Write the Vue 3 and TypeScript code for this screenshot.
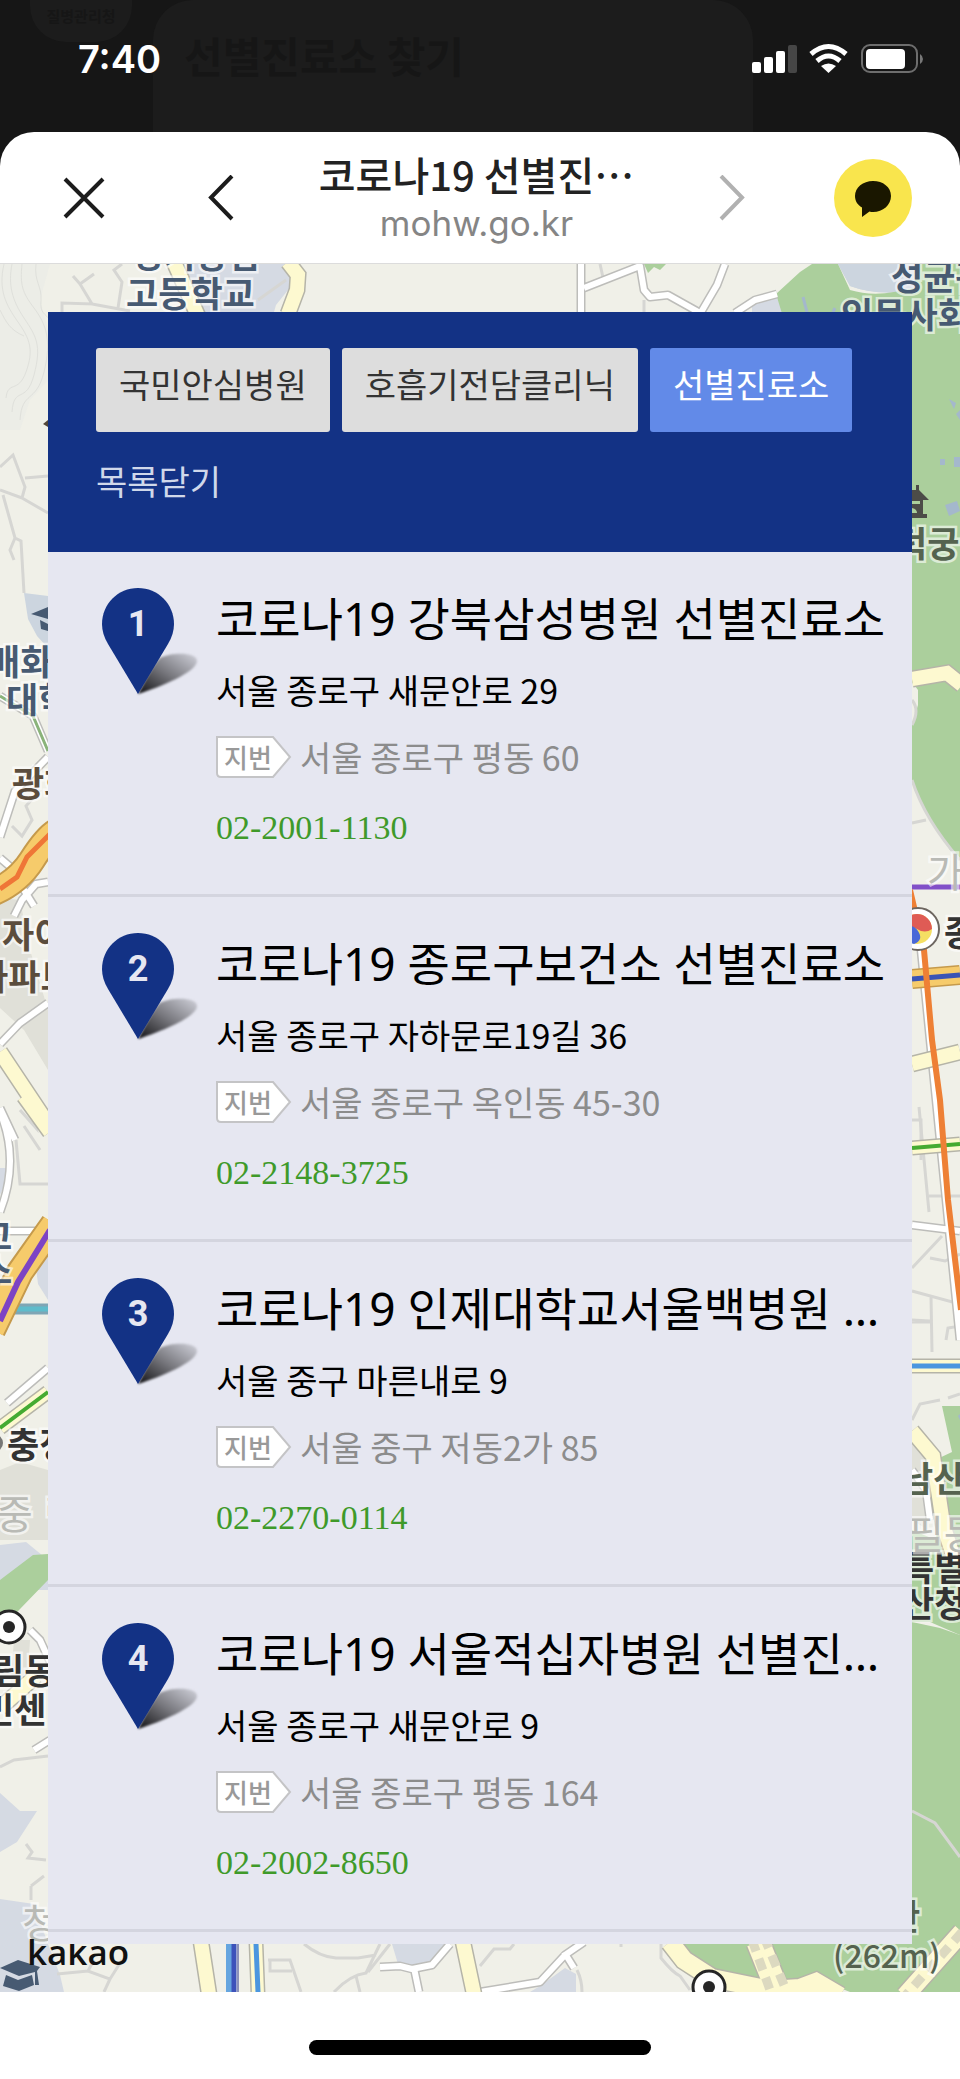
<script setup lang="ts">
import { ref } from 'vue'

interface Clinic {
  name: string
  road: string
  lot: string
  phone: string
}

interface MapLabel {
  x: number
  y: number
  text: string
  kind: string
}

const tabs: string[] = ['국민안심병원', '호흡기전담클리닉', '선별진료소']
const activeTab = ref<string>('선별진료소')
const listOpen = ref<boolean>(true)

const clinics: Clinic[] = [
  { name: '코로나19 강북삼성병원 선별진료소', road: '서울 종로구 새문안로 29', lot: '서울 종로구 평동 60', phone: '02-2001-1130' },
  { name: '코로나19 종로구보건소 선별진료소', road: '서울 종로구 자하문로19길 36', lot: '서울 종로구 옥인동 45-30', phone: '02-2148-3725' },
  { name: '코로나19 인제대학교서울백병원 선별진료소', road: '서울 중구 마른내로 9', lot: '서울 중구 저동2가 85', phone: '02-2270-0114' },
  { name: '코로나19 서울적십자병원 선별진료소', road: '서울 종로구 새문안로 9', lot: '서울 종로구 평동 164', phone: '02-2002-8650' },
]

const mapLabels: MapLabel[] = [
  { x: 131, y: 268, text: '경기상업', kind: 'school' },
  { x: 126, y: 307, text: '고등학교', kind: 'school' },
  { x: 891, y: 290, text: '성균관', kind: 'school' },
  { x: 841, y: 328, text: '인문사회', kind: 'school' },
  { x: -12, y: 675, text: '배화', kind: 'school' },
  { x: 6, y: 713, text: '대학', kind: 'school' },
  { x: -20, y: 1250, text: '고', kind: 'school' },
  { x: -20, y: 1284, text: '스', kind: 'school' },
  { x: 12, y: 797, text: '광화', kind: 'place' },
  { x: 2, y: 948, text: '자이', kind: 'place' },
  { x: -24, y: 990, text: '아파트', kind: 'place' },
  { x: 7, y: 1458, text: '충정', kind: 'station' },
  { x: -8, y: 1684, text: '림동', kind: 'station' },
  { x: -18, y: 1723, text: '민센', kind: 'station' },
  { x: 944, y: 946, text: '종', kind: 'station' },
  { x: 902, y: 1581, text: '특별', kind: 'station' },
  { x: 902, y: 1617, text: '산청', kind: 'station' },
  { x: 895, y: 557, text: '덕궁', kind: 'park' },
  { x: 901, y: 1492, text: '남산', kind: 'park' },
  { x: 888, y: 1930, text: '산', kind: 'park' },
  { x: 833, y: 1968, text: '(262m)', kind: 'park height' },
  { x: -4, y: 1529, text: '중', kind: 'district' },
  { x: 44, y: 1529, text: '림', kind: 'district' },
  { x: 22, y: 1938, text: '청', kind: 'district' },
  { x: 927, y: 887, text: '가', kind: 'district' },
  { x: 907, y: 1549, text: '필동', kind: 'district' },
]
</script>

<template>
  <div class="screen">
    <header class="status">
      <div class="ghost" aria-hidden="true">
        <span class="ghost-chip">질병관리청</span>
        <span class="ghost-card">선별진료소 찾기</span>
      </div>
      <time class="clock">7:40</time>
      <svg class="signals" viewBox="752 40 172 36" aria-hidden="true">
        <g fill="#fff">
          <rect x="752" y="62" width="9" height="11" rx="2" />
          <rect x="764" y="57" width="9" height="16" rx="2" />
          <rect x="776" y="51" width="9" height="22" rx="2" />
          <rect x="788" y="45" width="9" height="28" rx="2" fill="#464646" />
          <path d="M821 66Q828.500 61 836 66L828.500 73Z" />
        </g>
        <g fill="none" stroke="#fff" stroke-width="5">
          <path d="M811 54Q828.500 39 846 54" />
          <path d="M817 61Q828.500 51 840 61" />
        </g>
        <rect x="862" y="45" width="55" height="27" rx="8" fill="none" stroke="#6e6e6e" stroke-width="2" />
        <rect x="866" y="49" width="39" height="20" rx="4" fill="#fff" />
        <path d="M920 54Q923 56 923 59T920 64Z" fill="#777" />
      </svg>
    </header>

    <div class="sheet">
      <div class="bar">
        <button class="icon" type="button" aria-label="닫기">
          <svg width="44" height="44" viewBox="0 0 44 44"><path d="M3 3 41 41M41 3 3 41" stroke="#1c1c1c" stroke-width="4" /></svg>
        </button>
        <button class="icon nav" type="button" aria-label="뒤로">
          <svg width="26" height="46" viewBox="0 0 26 46"><path d="M24 1 3 22.500 24 44" fill="none" stroke="#1c1c1c" stroke-width="4" /></svg>
        </button>
        <div class="page-title">
          <h1>코로나19 선별진⋯</h1>
          <p>mohw.go.kr</p>
        </div>
        <button class="icon" type="button" aria-label="앞으로">
          <svg width="26" height="46" viewBox="0 0 26 46"><path d="M2 1 23 22.500 2 44" fill="none" stroke="#b1b1b1" stroke-width="4" /></svg>
        </button>
        <button class="chat" type="button" aria-label="카카오톡 공유">
          <svg width="38" height="38" viewBox="0 0 38 38"><path d="M19 2C9 2 1 8.500 1 17c0 5 2.500 9 7 11.500V38l7.500-5.500Q17 33 19 33c10 0 18-7 18-16S29 2 19 2Z" fill="#1a1700" /></svg>
        </button>
      </div>

      <main class="map-area">
        <svg class="map" viewBox="0 264 960 1728" preserveAspectRatio="xMidYMid slice" aria-hidden="true">
          <rect y="264" width="960" height="1728" fill="#f0f0e8" />

          <!-- terrain contours -->
          <path d="M0 264H50L40 300 48 330V380L30 400 20 430H0Z" fill="#ecede7" />
          <g fill="none" stroke="#dfe0db" stroke-width="1">
            <path d="M4 264C-2 290 6 305 18 322S34 350 26 372 8 380 6 398" />
            <path d="M12 264C8 285 12 300 24 318S42 345 34 375 14 385 12 412" />
            <path d="M22 264C20 285 22 292 34 308S52 340 44 372 22 390 20 420" />
            <path d="M36 264C34 282 42 286 41 300S44 312 52 322" />
            <path d="M0 310C6 322 10 330 24 336" />
          </g>

          <!-- blocks -->
          <g fill="#d5dae3">
            <path d="M186 264H286L292 285 276 305 274 312H196Z" />
            <path d="M24 593 48 596V648L37 636 28 619Z" fill="#ccd5df" />
            <path d="M838 264H915V290Q880 297 850 286Z" fill="#ccd5df" />
            <path d="M752 312V304L776 296 784 312Z" />
            <path d="M0 1168H6V1182L0 1195ZM36 1268 48 1250V1300L38 1284Z" />
            <path d="M0 1545 26 1542 48 1560V1590H0Z" />
            <path d="M0 1793 20 1811H37L17 1842 0 1852Z" />
            <path d="M0 1899 34 1904 48 1944 60 1975 64 1992H0Z" />
            <path d="M392 1944H445L432 1964 415 1970 398 1964Z" />
            <path d="M540 1986 565 1968 576 1974V1992H530Z" />
          </g>
          <g fill="#e0e0d8">
            <path d="M0 898 20 900 30 950 48 1010V1070L24 1030 0 1008Z" />
            <path d="M0 1470 20 1462 48 1470V1540H0Z" />
            <path d="M14 1640 30 1640 28 1670 10 1690Z" />
            <path d="M912 1430 930 1450 928 1530 912 1520Z" />
          </g>

          <!-- green areas -->
          <g fill="#abcf9c">
            <path d="M776 294 800 272 812 264H838L850 290Q880 299 915 286V264H960V858L950 850 925 810 912 782V725L918 705V690L912 682V320H784Z" />
            <path d="M644 264H666L660 270 654 267 648 273Z" />
            <path d="M0 1580 33 1555 48 1554V1580L20 1609 0 1630Z" />
            <path d="M942 1406H960V1635L930 1622H912V1530L936 1540 940 1500 935 1460 952 1452Z" />
            <path d="M912 1622 940 1628 960 1635V1992H850L810 1976 770 1988 700 1968 676 1944H912Z" />
          </g>
          <path d="M833 264 838 264 850 286Q880 297 915 288V264Z" fill="#ccd5df" />
          <g fill="#a4b8cc">
            <path d="M949 399 956 403 954 409ZM956 414 960 410V420ZM940 459H945V465H940ZM954 457H960V467H954ZM945 505 957 501 960 511 949 516ZM958 1416 960 1414V1420Z" />
          </g>
          <path d="M803 297 807 312M835 308 833 312" stroke="#a4b8cc" stroke-width="3" />

          <!-- minor roads -->
          <g fill="none" stroke="#d6d6d3" stroke-width="3">
            <path d="M73 276 80 284 94 274M80 284 92 304 62 303V312M92 304 130 311M122 264 114 270 122 282 118 308" />
            <path d="M0 467 13 455 25 487 22 498 0 490M22 498 48 513M25 478 48 476M3 495 15 538 21 541 24 593M15 538 10 550 14 560" />
            <path d="M258 300 286 280M600 264 604 282M644 300V312" />
            <path d="M12 826 22 836 32 820 26 806 40 790M20 1110 36 1128 32 1110M16 1140 20 1184H48M24 1126 40 1150" />
            <path d="M0 1767 14 1760 48 1756M26 1844 32 1852 28 1858 46 1860M31 1886V1900M31 1886 44 1876" />
            <path d="M57 1974 88 1971 110 1979 104 1992M88 1971 94 1960M110 1979 122 1960" />
            <path d="M304 1944Q320 1957 336 1958H358L376 1955M268 1960H290L301 1992M270 1960V1971H292M334 1992Q350 1975 366 1973L380 1944M356 1976 360 1992M390 1944 368 1972" />
            <path d="M480 1966 494 1949 510 1949 514 1944M577 1970Q582 1980 582 1992M621 1944V1947M661 1944V1958Q672 1972 680 1976L690 1990" />
            <path d="M912 823 926 820M919 1107 929 1212M912 1150H920M929 1196H960M912 1268 942 1236M930 1258 945 1261 960 1254M912 1291 960 1304M912 1322H932M931 1296 932 1352M912 1320 930 1321M946 1340 948 1328 960 1326M912 1420 920 1404 940 1400M948 1398 960 1394" />
            <path d="M912 1811 935 1823 960 1857M912 1120H921V1160M912 700Q920 710 912 725M912 780Q925 820 960 860" />
          </g>

          <!-- white streets with casing -->
          <g fill="none" stroke="#bdbdba" stroke-width="9" stroke-linejoin="round">
            <path d="M581 264V312M584 288 640 266 644 290 650 297 668 295 702 314M725 264 717 285 700 314M735 313 755 300 777 294" />
            <path d="M0 837 15 791 48 757M0 858 14 870 24 890 34 906M14 916 22 900 36 884 48 882M0 696 33 716 48 751M0 1044 20 1023 48 1003M0 1112Q20 1160 0 1212M0 1231H48M7 1403 48 1368M30 1630 40 1640 50 1662M34 1750 50 1740M0 1108 15 1140" />
            <path d="M380 1967 400 1966 412 1969 432 1965 450 1944M414 1968 419 1992M480 1992 540 1982 565 1955 584 1942M564 1952 574 1968" />
            <path d="M912 1225 960 1231M920 940 960 1340M912 1470 926 1490 930 1520" />
          </g>
          <g fill="none" stroke="#fff" stroke-width="6" stroke-linejoin="round">
            <path d="M581 264V312M584 288 640 266 644 290 650 297 668 295 702 314M725 264 717 285 700 314M735 313 755 300 777 294" />
            <path d="M0 837 15 791 48 757M0 858 14 870 24 890 34 906M14 916 22 900 36 884 48 882M0 696 33 716 48 751M0 1044 20 1023 48 1003M0 1112Q20 1160 0 1212M0 1231H48M7 1403 48 1368M30 1630 40 1640 50 1662M34 1750 50 1740M0 1108 15 1140" />
            <path d="M380 1967 400 1966 412 1969 432 1965 450 1944M414 1968 419 1992M480 1992 540 1982 565 1955 584 1942M564 1952 574 1968" />
            <path d="M912 1225 960 1231M920 940 960 1340M912 1470 926 1490 930 1520" />
          </g>
          <path d="M0 696 33 716 48 751" fill="none" stroke="#8ab37a" stroke-width="3" />

          <!-- yellow arterials -->
          <g fill="none" stroke="#b5b4a8" stroke-width="17">
            <path d="M174 262 198 316M288 262 298 275 297 290 288 314M0 1052 48 1124M24 1096 50 1132M0 1708 36 1676M912 679 947 673 962 685M912 1064 960 1052M912 1431 933 1456 943 1524 955 1562M201 1942 209 1994M463 1942 474 1994" />
            <path d="M256 1942 258 1994M0 1428 48 1392M912 1148 960 1144M912 1366H960" stroke-width="15" />
            <path d="M670 1942 684 1960 712 1978 770 1990 800 1988 816 1982 840 1996M962 1932 905 1996" stroke-width="21" />
            <path d="M758 1942 778 1992" stroke-width="26" />
          </g>
          <g fill="none" stroke="#fdf9d0" stroke-width="14">
            <path d="M174 262 198 316M288 262 298 275 297 290 288 314M0 1052 48 1124M24 1096 50 1132M0 1708 36 1676M912 679 947 673 962 685M912 1064 960 1052M912 1431 933 1456 943 1524 955 1562M201 1942 209 1994M463 1942 474 1994" />
            <path d="M256 1942 258 1994M0 1428 48 1392M912 1148 960 1144M912 1366H960" stroke-width="12" />
            <path d="M670 1942 684 1960 712 1978 770 1990 800 1988 816 1982 840 1996M962 1932 905 1996" stroke-width="18" />
            <path d="M758 1942 778 1992" stroke-width="23" />
          </g>
          <g fill="none" stroke="#dcd9c0" stroke-dasharray="12 8">
            <path d="M752 1940 770 1990M764 1937 784 1985" stroke-width="9" />
            <path d="M962 1932 905 1996" stroke-width="9" />
          </g>

          <!-- expressways and subway lines -->
          <path d="M-4 1309H48" stroke="#7fa6b5" stroke-width="11" />
          <path d="M-4 1309H48" stroke="#5fbccb" stroke-width="5" />
          <g fill="none" stroke="#c59a4c" stroke-width="28">
            <path d="M-8 893Q18 882 32 860T56 832M-8 1330 20 1272 54 1224" />
            <path d="M912 979 960 975" stroke-width="20" />
          </g>
          <g fill="none" stroke="#f6cb6b" stroke-width="24">
            <path d="M-8 893Q18 882 32 860T56 832M-8 1330 20 1272 54 1224" />
            <path d="M912 979 960 975" stroke-width="17" />
          </g>
          <g fill="none">
            <path d="M0 889 17 877 27 857 50 834" stroke="#ef7637" stroke-width="5" />
            <path d="M0 1321 18 1282 50 1230" stroke="#7d43c4" stroke-width="6" />
            <path d="M0 1428 48 1392M912 1148 960 1144" stroke="#45ab31" stroke-width="4" />
            <path d="M912 1366H960M256 1944 258 1992" stroke="#4b96df" stroke-width="5" />
            <path d="M912 887H960" stroke="#8150c8" stroke-width="5" />
            <path d="M912 979 960 975" stroke="#3a54b5" stroke-width="5" />
            <path d="M910 890 924 950 932 1040 940 1100 948 1200 961 1310" stroke="#ee8035" stroke-width="6" />
            <path d="M229 1944V1992" stroke="#65a5df" stroke-width="6" />
            <path d="M234 1944V1992" stroke="#3d52ba" stroke-width="5" />
            <path d="M238 1944V1992" stroke="#8c92bb" stroke-width="2" />
          </g>

          <!-- place symbols -->
          <g fill="#475a72">
            <path d="M31 614 48 607V619ZM40 620 48 624V631L41 629Z" />
            <path d="M0 1968 18 1960 40 1967 37 1971 39 1985H35V1972L19 1976ZM6 1975 18 1980 32 1975 34 1985 19 1991 3 1986Z" />
          </g>
          <path d="M43 424 48 420V427Z" fill="#524638" />
          <path d="M912 490H916V485H919V490L929 500H923V514H927V518H912V513H917Q917 509 912 508V504H920V501H912Z" fill="#4c4c48" />
          <g fill="#fff" stroke="#262626" stroke-width="3">
            <circle cx="9" cy="1627" r="16" />
            <circle cx="709" cy="1987" r="16" />
          </g>
          <circle cx="9" cy="1627" r="6" fill="#262626" />
          <circle cx="709" cy="1987" r="6" fill="#262626" />
          <circle cx="-6" cy="1443" r="9" fill="#777" />
          <circle cx="918" cy="929" r="21" fill="#fff" stroke="#6d6660" stroke-width="2" />
          <circle cx="917" cy="929" r="15" fill="#f5df63" />
          <path d="M902 929A15 15 0 0 1 932 929Q925 934 917 929T902 929Z" fill="#df5b55" />
          <path d="M902 929Q912 922 918 931T914 944A15 15 0 0 1 902 929Z" fill="#4968d8" />

          <text v-for="(label, i) in mapLabels" :key="i" :x="label.x" :y="label.y" :class="['label', label.kind]">{{ label.text }}</text>
          <text x="27" y="1965" class="brand">kakao</text>
        </svg>

        <section class="panel">
          <div class="panel-head">
            <div class="tabs">
              <button
                v-for="tab in tabs"
                :key="tab"
                type="button"
                :class="['tab', { active: tab === activeTab }]"
                :aria-pressed="tab === activeTab"
                @click="activeTab = tab"
              >{{ tab }}</button>
            </div>
            <button class="toggle" type="button" @click="listOpen = !listOpen">{{ listOpen ? '목록닫기' : '목록열기' }}</button>
          </div>
          <ol v-show="listOpen" class="list">
            <li v-for="(clinic, i) in clinics" :key="clinic.phone" class="clinic">
              <svg class="pin" width="108" height="114" viewBox="0 0 108 114" aria-hidden="true">
                <defs>
                  <linearGradient :id="'shade' + i" x1="0" y1="1" x2="1" y2="0">
                    <stop offset="0" stop-color="#111114" />
                    <stop offset="0.5" stop-color="#77777d" />
                    <stop offset="1" stop-color="#d0d1da" />
                  </linearGradient>
                </defs>
                <path d="M42 108C50 94 56 80 64 72 76 66 101 66 101 75S76 97 42 108Z" :fill="'url(#shade' + i + ')'" class="shadow" />
                <path d="M42 108 12 58C8 51 6 45 6 38 6 18 22 2 42 2S78 18 78 38C78 45 76 51 72 58Z" fill="#133285" />
                <text x="42" y="50" text-anchor="middle">{{ i + 1 }}</text>
              </svg>
              <div class="info">
                <h2>{{ clinic.name }}</h2>
                <p class="road">{{ clinic.road }}</p>
                <p class="lot">
                  <span class="badge">
                    <svg width="76" height="42" viewBox="0 0 76 42" aria-hidden="true"><path d="M1 1H57L74 21 57 41H5Q1 41 1 37Z" fill="#fff" stroke="#c4c4c6" stroke-width="2" /></svg>
                    <span>지번</span>
                  </span>
                  {{ clinic.lot }}
                </p>
                <a class="phone" :href="'tel:' + clinic.phone">{{ clinic.phone }}</a>
              </div>
            </li>
          </ol>
        </section>
      </main>
    </div>

    <footer class="home"><span></span></footer>
  </div>
</template>

<style>
body {
  margin: 0;
  background: #fff;
}
</style>

<style scoped>
.screen {
  overflow: hidden;
  background: #161616;
  font-family: "Noto Sans CJK KR", sans-serif;
}
h1, h2, p, ol {
  margin: 0;
  padding: 0;
  font-weight: 400;
}
button {
  margin: 0;
  padding: 0;
  border: 0;
  background: none;
  font: inherit;
  color: inherit;
  cursor: pointer;
}
svg {
  display: block;
  flex: none;
}
.status {
  position: relative;
  display: flex;
  justify-content: space-between;
  box-sizing: border-box;
  height: 132px;
  padding: 40px 36px 0 78px;
}
.ghost {
  position: absolute;
  inset: 0;
}
.ghost-chip,
.ghost-card {
  position: absolute;
  box-sizing: border-box;
  top: 0;
  background: #1c1c1c;
  color: #161616;
  font-weight: 700;
  white-space: nowrap;
}
.ghost-chip {
  left: 30px;
  width: 102px;
  height: 42px;
  border-radius: 0 0 36px 36px;
  font-size: 15px;
  line-height: 32px;
  text-align: center;
}
.ghost-card {
  left: 153px;
  width: 600px;
  height: 164px;
  padding-left: 31px;
  border-radius: 40px 40px 0 0;
  font-size: 42px;
  line-height: 110px;
}
.clock {
  position: relative;
  color: #fff;
  font: 600 38px/38px Inter, sans-serif;
}
.signals {
  position: relative;
  width: 172px;
  height: 36px;
}
.sheet {
  position: relative;
  overflow: hidden;
  border-radius: 34px 34px 0 0;
  background: #fff;
}
.bar {
  display: flex;
  align-items: center;
  box-sizing: border-box;
  height: 132px;
  padding: 0 48px;
  border-bottom: 1px solid #dcdcdc;
}
.icon {
  display: flex;
  flex: none;
  align-items: center;
  justify-content: center;
  width: 72px;
  height: 72px;
}
.nav {
  margin-left: 65px;
}
.page-title {
  flex: 1;
  min-width: 0;
  text-align: center;
}
.page-title h1 {
  color: #222;
  font-size: 40px;
  font-weight: 500;
  line-height: 46px;
  white-space: nowrap;
}
.page-title p {
  margin-top: 4px;
  color: #858585;
  font: 400 35px/44px Inter, sans-serif;
}
.chat {
  display: flex;
  flex: none;
  align-items: center;
  justify-content: center;
  width: 78px;
  height: 78px;
  margin-left: 66px;
  border-radius: 50%;
  background: #f9e54d;
}
.map-area {
  position: relative;
  padding: 48px;
}
.map {
  position: absolute;
  inset: 0;
  width: 100%;
  height: 100%;
}
.label {
  font-size: 35px;
  font-weight: 700;
  paint-order: stroke;
  stroke: #fff;
  stroke-opacity: 0.6;
  stroke-width: 5px;
}
.school { fill: #475a72; }
.place { fill: #5b4d3d; }
.station { fill: #333; }
.park { fill: #55634f; }
.district { fill: #b9bab5; font-size: 40px; font-weight: 400; }
.height { font-size: 32px; font-weight: 500; }
.brand {
  fill: #111;
  font: 600 35px "Open Sans", sans-serif;
}
.panel {
  position: relative;
  padding-bottom: 12px;
  background: #e6e7f1;
}
.panel-head {
  box-sizing: border-box;
  min-height: 240px;
  padding: 36px 48px 0;
  background: #133285;
  font-size: 34px;
}
.tabs {
  display: flex;
  gap: 12px;
}
.tab {
  padding: 0 23px 13px;
  border-radius: 3px;
  background: #ddd;
  color: #333;
  line-height: 71px;
  white-space: nowrap;
}
.tab.active {
  background: #628ae8;
  color: #fff;
}
.toggle {
  margin-top: 19px;
  color: #d0d8ea;
  line-height: 60px;
}
.list {
  list-style: none;
}
.clinic {
  display: flex;
  padding: 28px 16px 33px 48px;
  border-bottom: 3px solid #d4d5df;
}
.pin {
  margin: 6px 12px 0 0;
}
.pin text {
  fill: #e6e7f1;
  font: 700 36px Roboto, sans-serif;
}
.shadow {
  filter: blur(1px);
}
.info {
  flex: 1;
  min-width: 0;
}
.info h2 {
  overflow: hidden;
  color: #000;
  font-family: "Noto Sans", "Noto Sans CJK KR", sans-serif;
  font-size: 46px;
  line-height: 76px;
  text-overflow: ellipsis;
  white-space: nowrap;
}
.road,
.lot {
  margin-top: 1px;
  font-size: 34px;
  line-height: 66px;
  white-space: nowrap;
}
.road {
  color: #000;
}
.lot {
  display: flex;
  align-items: center;
  gap: 8px;
  color: #8c8c8c;
}
.badge {
  display: grid;
  align-items: center;
}
.badge > * {
  grid-area: 1 / 1;
}
.badge span {
  position: relative;
  padding-left: 8px;
  color: #999;
  font-size: 26px;
  font-weight: 500;
  line-height: 40px;
}
.phone {
  display: block;
  margin-top: 5px;
  color: #3f9a2a;
  font: 400 34px/66px "Liberation Serif", serif;
  text-decoration: none;
}
.home {
  display: flex;
  justify-content: center;
  box-sizing: border-box;
  height: 87px;
  padding-top: 48px;
  background: #fff;
}
.home span {
  width: 342px;
  height: 15px;
  border-radius: 8px;
  background: #000;
}
</style>
